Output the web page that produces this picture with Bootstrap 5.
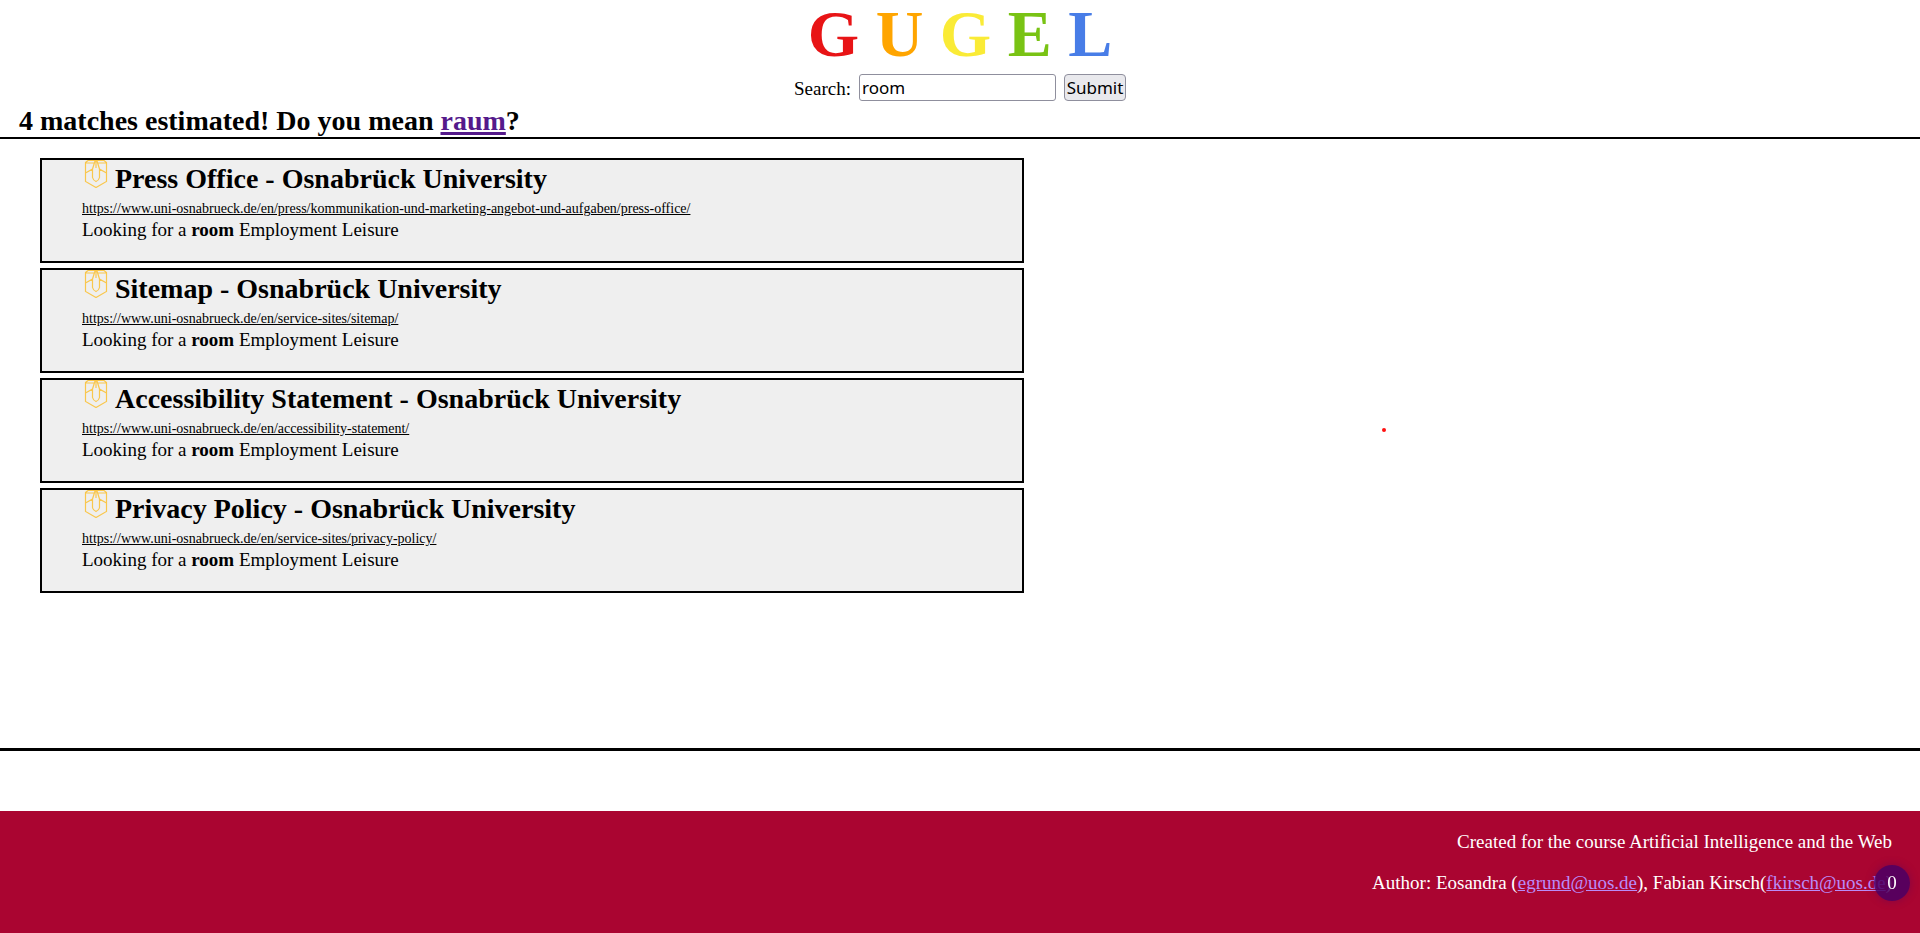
<!DOCTYPE html>
<html lang="en">
<head>
<meta charset="utf-8">
<meta name="viewport" content="width=device-width, initial-scale=1">
<title>Gugel</title>
<link href="https://cdn.jsdelivr.net/npm/bootstrap@5.3.0/dist/css/bootstrap.min.css" rel="stylesheet">
<style>
body { font-family: "Liberation Serif", serif; font-size: 19px; line-height: 22px; color: #000; background: #fff; }
h1, h2, h3 { font-size: 28px; line-height: 32px; font-weight: 700; margin: 0; }
.logo { font-size: 66px; line-height: 68px; }
.logo-red { color: #e81416; }
.logo-orange { color: #ffa500; }
.logo-yellow { color: #faeb36; }
.logo-green { color: #79c314; }
.logo-blue { color: #487de7; }
.search-form { margin-top: 6px; }
.search-form label { padding-top: 2px; }
.search-form input, .search-form button { font-family: "Noto Sans", sans-serif; font-size: 17px; line-height: 25px; color: #000; height: 27px; border: 1px solid #8f8f9d; }
.search-form input { width: 197px; border-radius: 3px; padding: 0 2px; }
.search-form button { width: 62px; border-radius: 4px; background: #e9e9ed; padding: 0; }
.summary { padding: 4px 19px 0; border-bottom: 2px solid #000; }
.summary a { color: #551a8b; text-decoration-thickness: 3px; }
.results { width: 51.25%; margin: 19px 0 0 40px; gap: 5px; }
.result { border: 2px solid #000; background: #efefef; padding: 0 40px 20px; }
.result svg { width: 28px; height: 28px; margin-right: 5px; }
.result h3 { padding-bottom: 4px; }
.result h3 span { padding-top: 3px; }
.result a { color: #000; font-size: 14px; line-height: 20px; }
.plot { padding-top: 289px; }
.plot-point { width: 4px; height: 4px; margin-left: 40%; background: #ff1010; }
main { border-bottom: 3px solid #000; margin-bottom: 60px; }
footer { background: #aa0531; color: #fff; padding: 20px 28px 39px; gap: 19px; }
footer a { color: #b98cf8; }
.counter { position: fixed; right: 10px; bottom: 32px; width: 36px; height: 36px; background: rgba(75, 0, 100, .86); color: #fff; box-shadow: 0 0 8px rgba(75, 0, 100, .4); }
</style>
</head>
<body class="d-flex flex-column min-vh-100">
<svg class="d-none" xmlns="http://www.w3.org/2000/svg">
<symbol id="crest" viewBox="0 0 28 28"><path fill="none" stroke="#f9c74d" stroke-width="1.200" d="M3.500 2.500 6 .5H22l2.500 2V21.500L14 27.500 3.500 21.500ZM3.500 3H12M16 3h8.500M3.500 13 10.500 9 13 1M24.500 13 17.500 9 15 1M10.500 9v8.500Q11 20 14 21.500 17 20 17.500 17.500V9M14 .5V8"/></symbol>
</svg>
<header>
<h1 class="logo text-center"><span class="logo-red">G</span> <span class="logo-orange">U</span> <span class="logo-yellow">G</span> <span class="logo-green">E</span> <span class="logo-blue">L</span></h1>
<form class="search-form d-flex justify-content-center align-items-center">
<label for="q" class="me-2">Search:</label>
<input type="text" id="q" name="q" value="room" class="me-2">
<button type="submit">Submit</button>
</form>
<h2 class="summary">4 matches estimated! Do you mean <a href="#">raum</a>?</h2>
</header>
<main class="d-flex flex-grow-1">
<section class="results d-flex flex-column">
<article class="result">
<h3 class="d-flex"><svg aria-hidden="true"><use href="#crest"/></svg><span>Press Office - Osnabrück University</span></h3>
<a class="d-table" href="#">https://www.uni-osnabrueck.de/en/press/kommunikation-und-marketing-angebot-und-aufgaben/press-office/</a>
<p class="m-0">Looking for a <b>room</b> Employment Leisure</p>
</article>
<article class="result">
<h3 class="d-flex"><svg aria-hidden="true"><use href="#crest"/></svg><span>Sitemap - Osnabrück University</span></h3>
<a class="d-table" href="#">https://www.uni-osnabrueck.de/en/service-sites/sitemap/</a>
<p class="m-0">Looking for a <b>room</b> Employment Leisure</p>
</article>
<article class="result">
<h3 class="d-flex"><svg aria-hidden="true"><use href="#crest"/></svg><span>Accessibility Statement - Osnabrück University</span></h3>
<a class="d-table" href="#">https://www.uni-osnabrueck.de/en/accessibility-statement/</a>
<p class="m-0">Looking for a <b>room</b> Employment Leisure</p>
</article>
<article class="result">
<h3 class="d-flex"><svg aria-hidden="true"><use href="#crest"/></svg><span>Privacy Policy - Osnabrück University</span></h3>
<a class="d-table" href="#">https://www.uni-osnabrueck.de/en/service-sites/privacy-policy/</a>
<p class="m-0">Looking for a <b>room</b> Employment Leisure</p>
</article>
</section>
<div class="plot flex-grow-1"><div class="plot-point rounded-circle"></div></div>
</main>
<footer class="d-flex flex-column text-end">
<p class="m-0">Created for the course Artificial Intelligence and the Web</p>
<p class="m-0">Author: Eosandra (<a href="#">egrund@uos.de</a>), Fabian Kirsch(<a href="#">fkirsch@uos.de</a>)</p>
</footer>
<div class="counter rounded-circle d-flex align-items-center justify-content-center">0</div>
<script src="https://cdn.jsdelivr.net/npm/bootstrap@5.3.0/dist/js/bootstrap.bundle.min.js"></script>
</body>
</html>
